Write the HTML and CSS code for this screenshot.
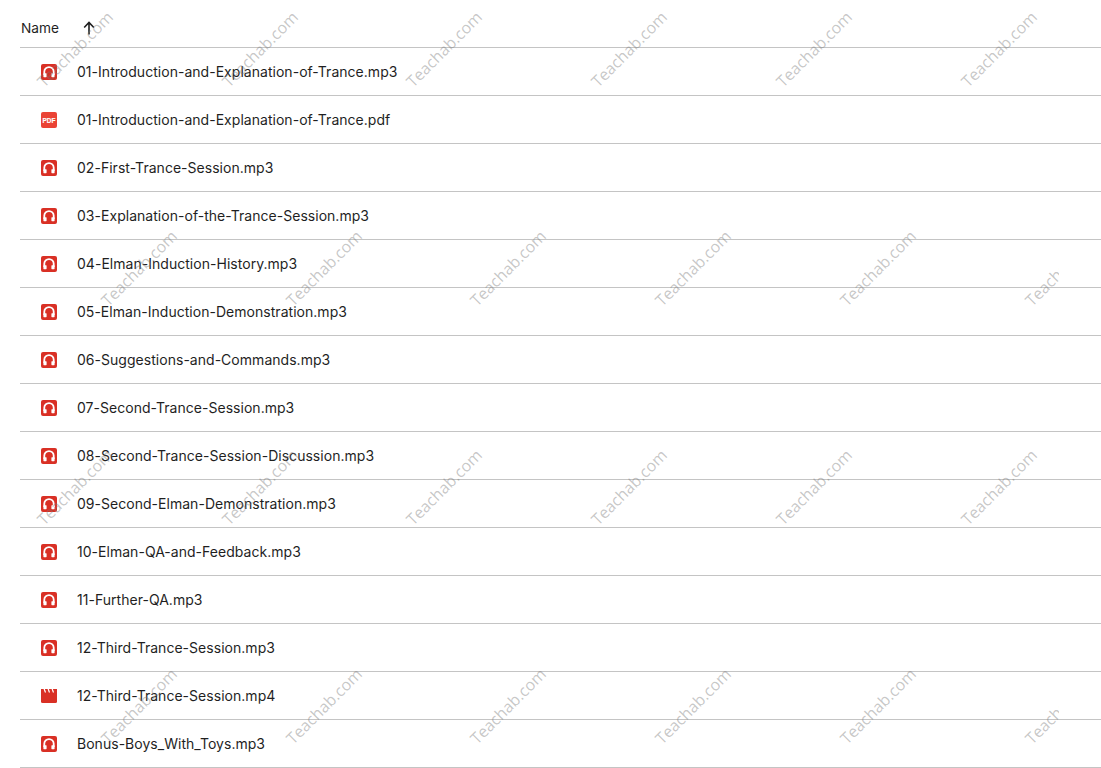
FILE: index.html
```html
<!DOCTYPE html>
<html lang="en">
<head>
<meta charset="utf-8">
<title>Files</title>
<link rel="stylesheet" href="styles.css">
</head>
<body>
<svg class="defs" width="0" height="0" aria-hidden="true">
  <symbol id="audio" viewBox="0 0 16 16">
    <rect width="16" height="16" rx="2" fill="#d93025"/>
    <path d="M3.300 11V7.800a4.700 4.700 0 0 1 9.400 0V11" fill="none" stroke="#fff" stroke-width="1.800"/>
    <rect x="2.400" y="9.200" width="3.200" height="4" rx=".6" fill="#fff"/>
    <rect x="10.400" y="9.200" width="3.200" height="4" rx=".6" fill="#fff"/>
  </symbol>
  <symbol id="video" viewBox="0 0 16 16">
    <path d="M0 5h16v8.500a1.500 1.500 0 0 1-1.500 1.500h-13A1.500 1.500 0 0 1 0 13.500z" fill="#d93025"/>
    <path d="M0 1h2.600l1.200 3.400h1.300L3.900 1h2.700l1.200 3.400h1.300L7.900 1h2.700l1.200 3.400h1.300L11.900 1H16v4H0z" fill="#d93025"/>
  </symbol>
</svg>
<main class="list">
  <div class="head">
    <span class="head-name">Name</span>
    <svg class="arrow" viewBox="0 0 16 16" width="16" height="16"><path d="M8 14.500V3M3.200 7.500 8 2.500l4.800 5" fill="none" stroke="#1f1f1f" stroke-width="1.600"/></svg>
  </div>
  <div class="row"><svg class="ico"><use href="#audio"/></svg><span class="fname">01-Introduction-and-Explanation-of-Trance.mp3</span></div>
  <div class="row"><svg class="ico" viewBox="0 0 16 16"><rect width="16" height="16" rx="2" fill="#ea4335"/><text x="8" y="10.500" text-anchor="middle" class="pdf-label">PDF</text></svg><span class="fname">01-Introduction-and-Explanation-of-Trance.pdf</span></div>
  <div class="row"><svg class="ico"><use href="#audio"/></svg><span class="fname">02-First-Trance-Session.mp3</span></div>
  <div class="row"><svg class="ico"><use href="#audio"/></svg><span class="fname">03-Explanation-of-the-Trance-Session.mp3</span></div>
  <div class="row"><svg class="ico"><use href="#audio"/></svg><span class="fname">04-Elman-Induction-History.mp3</span></div>
  <div class="row"><svg class="ico"><use href="#audio"/></svg><span class="fname">05-Elman-Induction-Demonstration.mp3</span></div>
  <div class="row"><svg class="ico"><use href="#audio"/></svg><span class="fname">06-Suggestions-and-Commands.mp3</span></div>
  <div class="row"><svg class="ico"><use href="#audio"/></svg><span class="fname">07-Second-Trance-Session.mp3</span></div>
  <div class="row"><svg class="ico"><use href="#audio"/></svg><span class="fname">08-Second-Trance-Session-Discussion.mp3</span></div>
  <div class="row"><svg class="ico"><use href="#audio"/></svg><span class="fname">09-Second-Elman-Demonstration.mp3</span></div>
  <div class="row"><svg class="ico"><use href="#audio"/></svg><span class="fname">10-Elman-QA-and-Feedback.mp3</span></div>
  <div class="row"><svg class="ico"><use href="#audio"/></svg><span class="fname">11-Further-QA.mp3</span></div>
  <div class="row"><svg class="ico"><use href="#audio"/></svg><span class="fname">12-Third-Trance-Session.mp3</span></div>
  <div class="row"><svg class="ico"><use href="#video"/></svg><span class="fname">12-Third-Trance-Session.mp4</span></div>
  <div class="row"><svg class="ico"><use href="#audio"/></svg><span class="fname">Bonus-Boys_With_Toys.mp3</span></div>
</main>
<div class="marks" aria-hidden="true">
  <span class="mark" style="left:75px;top:49px">Teachab.com</span>
  <span class="mark" style="left:259.500px;top:49px">Teachab.com</span>
  <span class="mark" style="left:444px;top:49px">Teachab.com</span>
  <span class="mark" style="left:629px;top:49px">Teachab.com</span>
  <span class="mark" style="left:814px;top:49px">Teachab.com</span>
  <span class="mark" style="left:999px;top:49px">Teachab.com</span>
  <span class="mark" style="left:139px;top:268px">Teachab.com</span>
  <span class="mark" style="left:324px;top:268px">Teachab.com</span>
  <span class="mark" style="left:508px;top:268px">Teachab.com</span>
  <span class="mark" style="left:693px;top:268px">Teachab.com</span>
  <span class="mark" style="left:878px;top:268px">Teachab.com</span>
  <span class="mark" style="left:1063px;top:268px">Teachab.com</span>
  <span class="mark" style="left:75px;top:487px">Teachab.com</span>
  <span class="mark" style="left:259.500px;top:487px">Teachab.com</span>
  <span class="mark" style="left:444px;top:487px">Teachab.com</span>
  <span class="mark" style="left:629px;top:487px">Teachab.com</span>
  <span class="mark" style="left:814px;top:487px">Teachab.com</span>
  <span class="mark" style="left:999px;top:487px">Teachab.com</span>
  <span class="mark" style="left:139px;top:706px">Teachab.com</span>
  <span class="mark" style="left:324px;top:706px">Teachab.com</span>
  <span class="mark" style="left:508px;top:706px">Teachab.com</span>
  <span class="mark" style="left:693px;top:706px">Teachab.com</span>
  <span class="mark" style="left:878px;top:706px">Teachab.com</span>
  <span class="mark" style="left:1063px;top:706px">Teachab.com</span>
</div>
</body>
</html>
```
FILE: styles.css
```css
html, body { margin: 0; padding: 0; height: 768px; overflow: hidden; background: #fff; }
body { position: relative; font-family: Inter, Roboto, sans-serif; color: #1f1f1f; }
.defs { position: absolute; }
.pdf-label { font: 700 6.400px "Liberation Sans", sans-serif; fill: #fff; stroke: #fff; stroke-width: .15px; }
.list { margin-left: 20px; }
.head { display: flex; align-items: center; height: 47px; border-bottom: 1px solid #c4c4c4; padding-left: 1px; font-size: 13.700px; }
.head > * { position: relative; top: 4px; }
.head-name { width: 60px; }
.arrow { display: block; }
.row { display: flex; align-items: center; height: 47px; border-bottom: 1px solid #c4c4c4; padding-left: 21px; }
.ico { width: 16px; height: 16px; flex: none; margin-right: 20px; }
.fname { font-size: 14px; letter-spacing: .03px; white-space: nowrap; }
.marks { position: absolute; left: 0; top: 0; width: 1059px; height: 768px; overflow: hidden; pointer-events: none; }
.mark { position: absolute; transform: translate(-50%, -50%) rotate(-45deg); font-family: "Open Sans", sans-serif; font-size: 16px; color: rgba(120, 120, 120, .42); white-space: nowrap; }
```
